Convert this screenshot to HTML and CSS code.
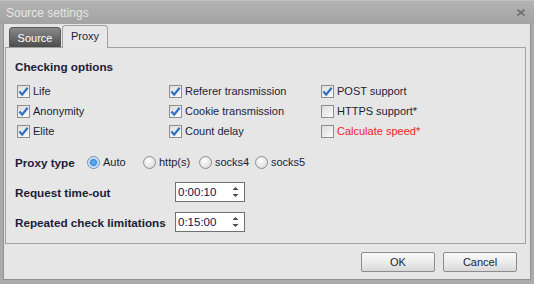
FILE: index.html
```html
<!DOCTYPE html>
<html lang="en">
<head>
    <meta charset="UTF-8">
    <title>Source settings</title>
    <link rel="stylesheet" href="styles.css">
</head>
<body>
    <div class="window">
        <div class="titlebar">
            <span class="title">Source settings</span>
            <svg class="close" width="8" height="7" viewBox="0 0 8 7"><path d="M0.5 0.5 L7.5 6.5 M7.5 0.5 L0.5 6.5" stroke="#6e6e6e" stroke-width="1.6"/></svg>
        </div>
        <div class="frame">
            <div class="client">
                <div class="tabs">
                    <div class="tab">Source</div>
                    <div class="tab active">Proxy</div>
                </div>
                <div class="panel">
                    <div class="heading">Checking options</div>
                    <div class="options">
                        <label class="check on"><span class="box"><svg width="11" height="11" viewBox="0 0 11 11"><path d="M1.5 5.5 L4.2 8.6 L9.6 1.8" fill="none" stroke="#2d6ec6" stroke-width="2.2"/></svg></span>Life</label>
                        <label class="check on"><span class="box"><svg width="11" height="11" viewBox="0 0 11 11"><path d="M1.5 5.5 L4.2 8.6 L9.6 1.8" fill="none" stroke="#2d6ec6" stroke-width="2.2"/></svg></span>Referer transmission</label>
                        <label class="check on"><span class="box"><svg width="11" height="11" viewBox="0 0 11 11"><path d="M1.5 5.5 L4.2 8.6 L9.6 1.8" fill="none" stroke="#2d6ec6" stroke-width="2.2"/></svg></span>POST support</label>
                        <label class="check on"><span class="box"><svg width="11" height="11" viewBox="0 0 11 11"><path d="M1.5 5.5 L4.2 8.6 L9.6 1.8" fill="none" stroke="#2d6ec6" stroke-width="2.2"/></svg></span>Anonymity</label>
                        <label class="check on"><span class="box"><svg width="11" height="11" viewBox="0 0 11 11"><path d="M1.5 5.5 L4.2 8.6 L9.6 1.8" fill="none" stroke="#2d6ec6" stroke-width="2.2"/></svg></span>Cookie transmission</label>
                        <label class="check"><span class="box"></span>HTTPS support*</label>
                        <label class="check on"><span class="box"><svg width="11" height="11" viewBox="0 0 11 11"><path d="M1.5 5.5 L4.2 8.6 L9.6 1.8" fill="none" stroke="#2d6ec6" stroke-width="2.2"/></svg></span>Elite</label>
                        <label class="check on"><span class="box"><svg width="11" height="11" viewBox="0 0 11 11"><path d="M1.5 5.5 L4.2 8.6 L9.6 1.8" fill="none" stroke="#2d6ec6" stroke-width="2.2"/></svg></span>Count delay</label>
                        <label class="check warn"><span class="box"></span>Calculate speed*</label>
                    </div>

                    <div class="proxy-row">
                        <span class="label">Proxy type</span>
                        <label class="radio on"><span class="dot"></span>Auto</label>
                        <label class="radio"><span class="dot"></span>http(s)</label>
                        <label class="radio"><span class="dot"></span>socks4</label>
                        <label class="radio"><span class="dot"></span>socks5</label>
                    </div>

                    <div class="field">
                        <span class="label">Request time-out</span>
                        <div class="spin">
                            <span class="value">0:00:10</span>
                            <span class="arrows"><svg width="7" height="12" viewBox="0 0 7 12"><path d="M3.5 1 L6.5 4 L0.5 4 Z M0.5 8 L6.5 8 L3.5 11 Z" fill="#4a4a4a"/></svg></span>
                        </div>
                    </div>
                    <div class="field">
                        <span class="label">Repeated check limitations</span>
                        <div class="spin">
                            <span class="value">0:15:00</span>
                            <span class="arrows"><svg width="7" height="12" viewBox="0 0 7 12"><path d="M3.5 1 L6.5 4 L0.5 4 Z M0.5 8 L6.5 8 L3.5 11 Z" fill="#4a4a4a"/></svg></span>
                        </div>
                    </div>
                </div>
                <div class="buttons">
                    <button>OK</button>
                    <button>Cancel</button>
                </div>
            </div>
        </div>
    </div>
</body>
</html>
```

FILE: styles.css
```css
body {
    margin: 0;
    font-family: "Liberation Sans", Arial, sans-serif;
    font-size: 11px;
    color: #1c1c38;
}

.window {
    width: 534px;
    height: 284px;
    display: flex;
    flex-direction: column;
    background: #ababab;
}

.titlebar {
    height: 24px;
    flex: none;
    display: flex;
    align-items: center;
    justify-content: space-between;
    padding: 0 9px 0 6px;
    background: linear-gradient(#b2b2b2, #a3a3a3);
    border-top: 1px solid #c0c0c0;
    box-sizing: border-box;
}

.title {
    font-size: 12px;
    color: #e6e6e6;
}

.close {
    margin-top: -1px;
}

.frame {
    flex: 1;
    padding: 0 3px 4px 3px;
    display: flex;
}

.client {
    flex: 1;
    background: #e6e6e6;
    border: 1px solid #909090;
    border-top: none;
    padding: 1px 4px 0 1px;
    display: flex;
    flex-direction: column;
}

/* tabs */
.tabs {
    height: 22px;
    display: flex;
    align-items: flex-end;
    padding-left: 4px;
    gap: 1px;
}

.tab {
    width: 52px;
    height: 20px;
    box-sizing: border-box;
    display: flex;
    align-items: center;
    justify-content: center;
    color: #fff;
    border: 1px solid #5a5a5a;
    border-bottom: none;
    border-radius: 4px 4px 0 0;
    background: linear-gradient(#8a8a8a, #4c4c4c);
}

.tab.active {
    width: 46px;
    height: 23px;
    margin-bottom: -1px;
    color: #1c1c38;
    background: #e8e8e8;
    border-color: #a2a2a2;
    position: relative;
    z-index: 1;
    padding-bottom: 3px;
}

.panel {
    height: 197px;
    box-sizing: border-box;
    border: 1px solid #a2a2a2;
    padding: 11px 0 0 9px;
}

.heading,
.label {
    font-weight: bold;
    font-size: 11.7px;
}

.heading {
    line-height: 16px;
}

.options {
    display: grid;
    grid-template-columns: 152px 152px auto;
    grid-auto-rows: 20px;
    margin: 6px 0 0 2px;
}

.check {
    display: flex;
    align-items: center;
    gap: 3px;
}

.box {
    width: 13px;
    height: 13px;
    box-sizing: border-box;
    border: 1px solid #8e8e8e;
    background: linear-gradient(135deg, #dcdcdc, #fbfbfb);
    display: flex;
    align-items: center;
    justify-content: center;
}

.warn {
    color: #ee1c24;
}

.proxy-row {
    display: flex;
    align-items: center;
    height: 20px;
    margin-top: 11px;
}

.proxy-row .label {
    width: 72px;
}

.radio {
    width: 56px;
    display: flex;
    align-items: center;
    gap: 3px;
}

.dot {
    width: 13px;
    height: 13px;
    box-sizing: border-box;
    border-radius: 50%;
    border: 1px solid #8e8e8e;
    background: radial-gradient(circle at 40% 35%, #ffffff, #d2d2d2);
}

.radio.on .dot {
    background: radial-gradient(circle, #6fb4f2 0, #3d8ddc 3px, #b5d6f4 4px, #eef4fa 6px);
    border-color: #6a8fb8;
}

.field {
    display: flex;
    align-items: center;
    margin-top: 10px;
    height: 20px;
}

.field .label {
    width: 160px;
}

.spin {
    width: 70px;
    height: 20px;
    box-sizing: border-box;
    border: 1px solid #707070;
    background: #fff;
    display: flex;
    align-items: center;
    justify-content: space-between;
    padding: 0 5px 0 2px;
    font-size: 11.5px;
    color: #10104a;
}

.arrows svg {
    display: block;
}

/* bottom buttons */
.buttons {
    display: flex;
    justify-content: flex-end;
    gap: 8px;
    margin: 8px 9px 0 0;
}

button {
    width: 74px;
    height: 20px;
    font-family: inherit;
    font-size: 11px;
    color: #1c1c38;
    border: 1px solid #8c8c8c;
    border-radius: 2px;
    background: linear-gradient(#fafafa, #ececec 50%, #d8d8d8);
    padding: 0;
}
```
